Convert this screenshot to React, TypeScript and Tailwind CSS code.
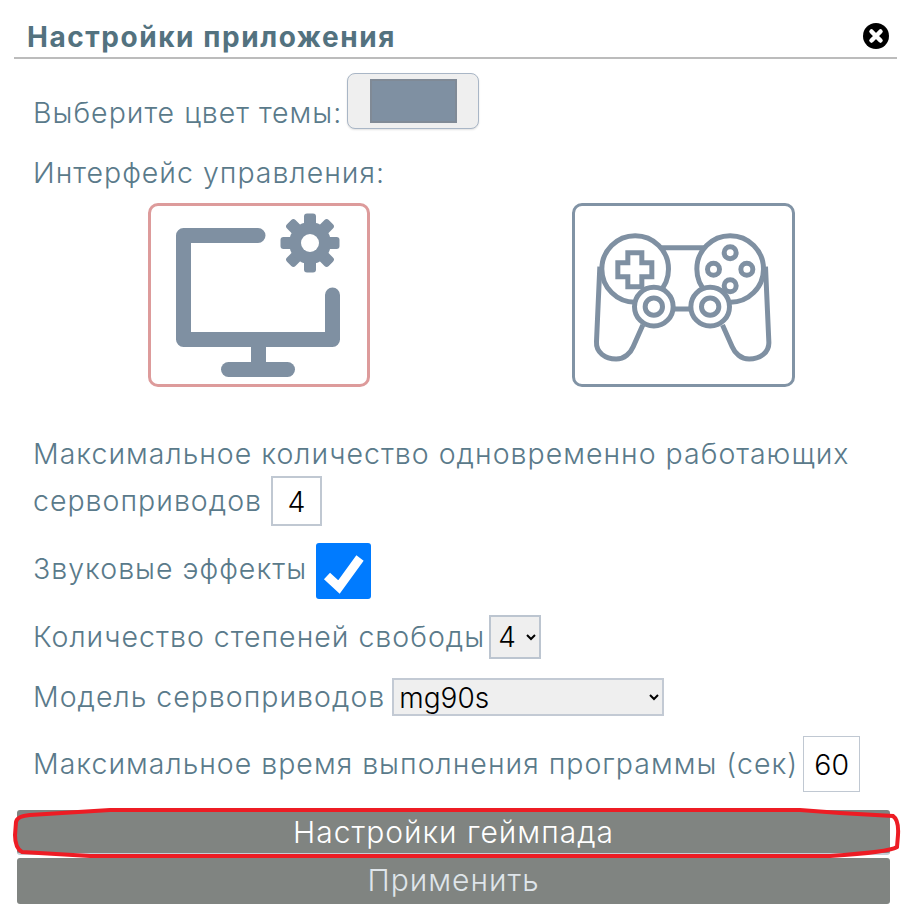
const ink = "#7f90a2";

function MonitorIcon() {
  const teeth = [0, 45, 90, 135, 180, 225, 270, 315];
  return (
    <svg viewBox="151 206 216 178" className="block w-full h-full">
      <path d="M258 235.5H183.5V339.5H332.5V295" fill="none" stroke={ink} strokeWidth="15" strokeLinecap="round" strokeLinejoin="round" />
      <rect x="251" y="345" width="15" height="20" fill={ink} />
      <rect x="221" y="362" width="74" height="15" rx="7.5" fill={ink} />
      {teeth.map((a) => (
        <rect key={a} x="304" y="213.5" width="12" height="20" rx="3" fill={ink} transform={`rotate(${a} 310 243)`} />
      ))}
      <circle cx="310" cy="243" r="21" fill={ink} />
      <circle cx="310" cy="243" r="9" fill="#fff" />
    </svg>
  );
}

function GamepadIcon() {
  return (
    <svg viewBox="33 33 648 534" className="block w-full h-full">
      <g fill="none" stroke={ink} strokeWidth="15">
        <path d="M290 158H420" />
        <path d="M330 342H378" />
        <path d="M106 215L96 440C94 472 122 492 155 492C180 492 198 474 206 455L235 390" strokeLinejoin="round" />
        <path d="M603 215L613 440C615 472 587 492 554 492C529 492 511 474 503 455L474 390" strokeLinejoin="round" />
        <circle cx="212" cy="222" r="100" />
        <circle cx="497" cy="222" r="100" />
        <circle cx="268" cy="335" r="58" fill="#fff" />
        <circle cx="268" cy="335" r="26" />
        <circle cx="437" cy="335" r="58" fill="#fff" />
        <circle cx="437" cy="335" r="26" />
        <path d="M190 173H232V203H262V245H232V275H190V245H160V203H190Z" />
        <circle cx="497" cy="173" r="18" />
        <circle cx="447" cy="223" r="18" />
        <circle cx="547" cy="223" r="18" />
        <circle cx="497" cy="272" r="18" />
      </g>
    </svg>
  );
}

export default function App() {
  return (
    <div className="relative w-[911px] h-[922px] bg-white overflow-hidden text-[#5a7a8a] font-['Inter','Noto_Sans',sans-serif] font-light text-[28.5px] tracking-[1px]">
      <div className="mx-[14px] pl-[13px] pr-[11px] h-[59px] border-b-2 border-[#bcbcbc] flex items-end justify-between pb-[4px]">
        <h1 className="font-bold text-[#53727f] text-[28px] leading-[32px] tracking-[1.55px]">Настройки приложения</h1>
        <svg viewBox="0 0 26 26" className="w-[26px] h-[26px] mb-[4px] -mr-[3px]">
          <circle cx="13" cy="13" r="13" fill="#000" />
          <path d="M8.5 8.5L17.5 17.5M17.5 8.5L8.5 17.5" stroke="#fff" strokeWidth="4.5" strokeLinecap="round" />
        </svg>
      </div>

      <div className="pl-[33px]">
        <div className="flex items-end gap-[5px] mt-[14px] h-[56px]">
          <span className="leading-[32px]">Выберите цвет темы:</span>
          <button className="w-[132px] h-[56px] rounded-[8px] bg-[#efefef] border border-[#a9b6c6] flex items-center justify-center shadow-[0_1px_2px_rgba(0,0,0,0.12)]">
            <span className="block w-[87px] h-[44px] bg-[#7f90a2] border-2 border-[#808a96]"></span>
          </button>
        </div>

        <div className="mt-[24px] h-[40px] leading-[40px]">Интерфейс управления:</div>

        <div className="flex mt-[10px] ml-[115px] gap-[202px]">
          <div className="w-[222px] h-[184px] rounded-[10px] border-[3px] border-[#dd9b9b] box-border overflow-hidden">
            <MonitorIcon />
          </div>
          <div className="w-[223px] h-[184px] rounded-[10px] border-[3px] border-[#8193a5] box-border overflow-hidden">
            <GamepadIcon />
          </div>
        </div>

        <div className="mt-[43px] leading-[48px] w-[860px]">
          Максимальное количество одновременно работающих
          <div className="flex items-center gap-[9px] h-[50px] -mt-[2px]">
            <span>сервоприводов</span>
            <input readOnly value="4" className="w-[51px] h-[50px] border-2 border-[#c0c8d2] text-center text-black tracking-normal outline-none" />
          </div>
        </div>

        <div className="flex items-center gap-[9px] mt-[17px] h-[56px]">
          <span className="pb-[4px]">Звуковые эффекты</span>
          <span className="w-[55px] h-[56px] rounded-[3px] bg-[#007bff] flex items-center justify-center">
            <svg viewBox="0 0 55 56" className="w-[55px] h-[56px]">
              <path d="M11 33L23 44L44 15" fill="none" stroke="#fff" strokeWidth="9" />
            </svg>
          </span>
        </div>

        <div className="flex items-center gap-[4px] mt-[16px] h-[44px]">
          <span>Количество степеней свободы</span>
          <select defaultValue="4" className="w-[52px] h-[44px] pl-[3px] border-2 border-[#bcc5d0] bg-[#efefef] text-black text-[28px] tracking-normal outline-none">
            <option>4</option>
          </select>
        </div>

        <div className="flex items-center gap-[7px] mt-[19px] h-[38px]">
          <span>Модель сервоприводов</span>
          <select defaultValue="mg90s" className="w-[272px] h-[38px] pl-[1px] border-2 border-[#c3cad4] bg-[#efefef] text-black text-[28px] tracking-normal outline-none">
            <option>mg90s</option>
          </select>
        </div>

        <div className="flex items-center gap-[5px] mt-[20px] h-[56px]">
          <span className="whitespace-nowrap">Максимальное время выполнения программы (сек)</span>
          <input readOnly value="60" className="w-[57px] h-[56px] border border-[#c0c8d2] text-center text-black tracking-normal outline-none" />
        </div>
      </div>

      <div className="mx-[17px] w-[873px] mt-[18px] flex flex-col gap-[3px]">
        <button className="h-[45px] pb-[2px] rounded-[3px] bg-[#808481] text-white text-[30px] border-b-2 border-[#c4cdd6]">Настройки геймпада</button>
        <button className="h-[46px] rounded-[3px] bg-[#808481] text-[#dfe5ea] text-[30px] pb-[6px]">Применить</button>
      </div>

      <svg viewBox="0 0 911 922" className="absolute inset-0 w-[911px] h-[922px] pointer-events-none">
        <path
          d="M110 810H800L840 813L893 816Q899 820 898 835L897 847Q890 852 830 856H90L22 852Q15 848 15 835L16 822Q17 816 30 815Z"
          fill="none"
          stroke="#ed1c24"
          strokeWidth="4"
        />
      </svg>
    </div>
  );
}
